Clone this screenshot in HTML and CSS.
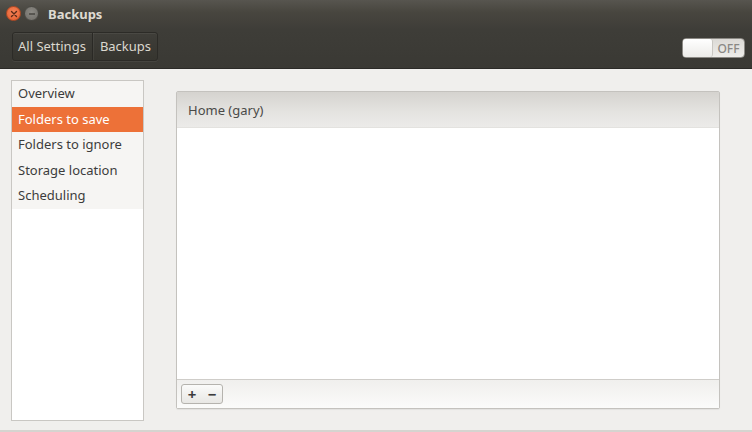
FILE: index.html
```html
<!DOCTYPE html>
<html>
<head>
<meta charset="utf-8">
<link rel="stylesheet" href="styles.css">
</head>
<body>
<div class="window">
  <div class="header">
    <div class="titlebar">
      <span class="wbtn close"><svg width="8" height="8" viewBox="0 0 8 8"><path d="M1.5 1.5L6.5 6.5M6.5 1.5L1.5 6.5" stroke="#5a2a17" stroke-width="1.4" stroke-linecap="round"/></svg></span>
      <span class="wbtn min"><svg width="8" height="8" viewBox="0 0 8 8"><path d="M1 4H7" stroke="#3e3d39" stroke-width="1.3"/></svg></span>
      <span class="title">Backups</span>
    </div>
    <div class="toolbar">
      <div class="crumbs">
        <span class="crumb">All Settings</span>
        <span class="crumb">Backups</span>
      </div>
      <div class="switch">
        <span class="knob"></span>
        <span class="off">OFF</span>
      </div>
    </div>
  </div>
  <div class="content">
    <div class="sidebar">
      <ul class="nav">
        <li>Overview</li>
        <li class="active">Folders to save</li>
        <li>Folders to ignore</li>
        <li>Storage location</li>
        <li>Scheduling</li>
      </ul>
    </div>
    <div class="main">
      <div class="panel">
        <div class="panel-head">Home (gary)</div>
        <div class="panel-body"></div>
        <div class="panel-foot">
          <div class="pm">
            <span class="pmb">+</span>
            <span class="pmb">−</span>
          </div>
        </div>
      </div>
    </div>
  </div>
</div>
</body>
</html>
```

FILE: styles.css
```css
* { box-sizing: border-box; }
html, body { margin: 0; padding: 0; }
body {
  width: 752px;
  height: 432px;
  overflow: hidden;
  font-family: "Noto Sans", "DejaVu Sans", sans-serif;
  font-size: 13px;
  background: #f0efed;
}
.window {
  width: 752px;
  height: 432px;
  display: flex;
  flex-direction: column;
}
.header {
  height: 69px;
  background: linear-gradient(#57554f 0px, #48463f 12px, #3e3d38 30px, #3a3934 68px);
  border-bottom: 1px solid #2b2a27;
}
.titlebar {
  height: 27px;
  display: flex;
  align-items: center;
  padding-left: 6px;
}
.wbtn {
  width: 15px;
  height: 15px;
  border-radius: 50%;
  display: flex;
  align-items: center;
  justify-content: center;
  margin-right: 3px;
}
.close {
  background: radial-gradient(circle at 50% 40%, #f5845a, #e35c2c);
  border: 1px solid #b24a24;
}
.min {
  background: radial-gradient(circle at 50% 40%, #8d8b85, #6d6b66);
  border: 1px solid #4a4944;
}
.title {
  margin-left: 6px;
  color: #dfdbd2;
  font-weight: bold;
  font-size: 13px;
}
.toolbar {
  height: 41px;
  display: flex;
  align-items: center;
  justify-content: space-between;
  padding: 0 7px 3px 12px;
}
.crumbs {
  display: flex;
  height: 29px;
  border: 1px solid #2c2b27;
  border-radius: 3px;
  background: linear-gradient(#3f3e39, #36352f);
  box-shadow: inset 0 1px 0 rgba(255,255,255,0.06), 0 1px 0 rgba(255,255,255,0.06);
}
.crumb {
  display: flex;
  align-items: center;
  padding: 0 6px 0 5px;
  color: #dcd8cf;
  font-size: 13px;
}
.crumb + .crumb {
  border-left: 1px solid #2a2925;
  box-shadow: inset 1px 0 0 rgba(255,255,255,0.05);
  padding: 0 6px 0 7px;
}
.switch {
  width: 63px;
  height: 20px;
  border-radius: 4px;
  background: linear-gradient(#dcdad6, #eeedea);
  border: 1px solid #8c8a85;
  display: flex;
  align-items: center;
  margin-top: 4px;
}
.knob {
  width: 30px;
  height: 18px;
  border-radius: 3px;
  background: linear-gradient(#ffffff, #ecebe8);
  border-right: 1px solid #c9c7c2;
}
.off {
  flex: 1;
  text-align: center;
  color: #8a8884;
  font-size: 12px;
  font-weight: 500;
}
.content {
  flex: 1;
  display: flex;
  align-items: flex-start;
  padding: 11px 32px 0 11px;
  border-bottom: 2px solid #d6d4d0;
}
.sidebar {
  width: 133px;
  height: 341px;
  background: #ffffff;
  border: 1px solid #c9c7c3;
}
.nav {
  list-style: none;
  margin: 0;
  padding: 0;
  background: #f6f5f3;
}
.nav li {
  height: 25.5px;
  line-height: 25px;
  padding-left: 6px;
  color: #3c3c3c;
}
.nav li.active {
  background: #ed7138;
  color: #ffffff;
}
.main {
  flex: 1;
  padding: 11px 0 0 32px;
}
.panel {
  height: 318px;
  border: 1px solid #c4c2be;
  border-radius: 2px;
  background: #ffffff;
  display: flex;
  flex-direction: column;
  box-shadow: 0 1px 1px rgba(0,0,0,0.06);
}
.panel-head {
  height: 36px;
  display: flex;
  align-items: center;
  padding-left: 11px;
  color: #4a4a48;
  background: linear-gradient(#d5d3cf, #e5e4e1 60%, #ecebe9);
  border-bottom: 1px solid #e3e2df;
}
.panel-body {
  flex: 1;
  background: #ffffff;
}
.panel-foot {
  height: 29px;
  border-top: 1px solid #cfcdc9;
  background: linear-gradient(#f0efed, #fbfbfa);
  padding: 4px 0 0 4px;
}
.pm {
  display: inline-flex;
  height: 20px;
  border: 1px solid #b5b3ae;
  border-radius: 3px;
  background: linear-gradient(#fbfbfa, #e8e7e4);
}
.pmb {
  width: 20px;
  display: flex;
  align-items: center;
  justify-content: center;
  font-size: 15px;
  font-weight: bold;
  color: #3c3c3c;
  line-height: 1;
}
```
